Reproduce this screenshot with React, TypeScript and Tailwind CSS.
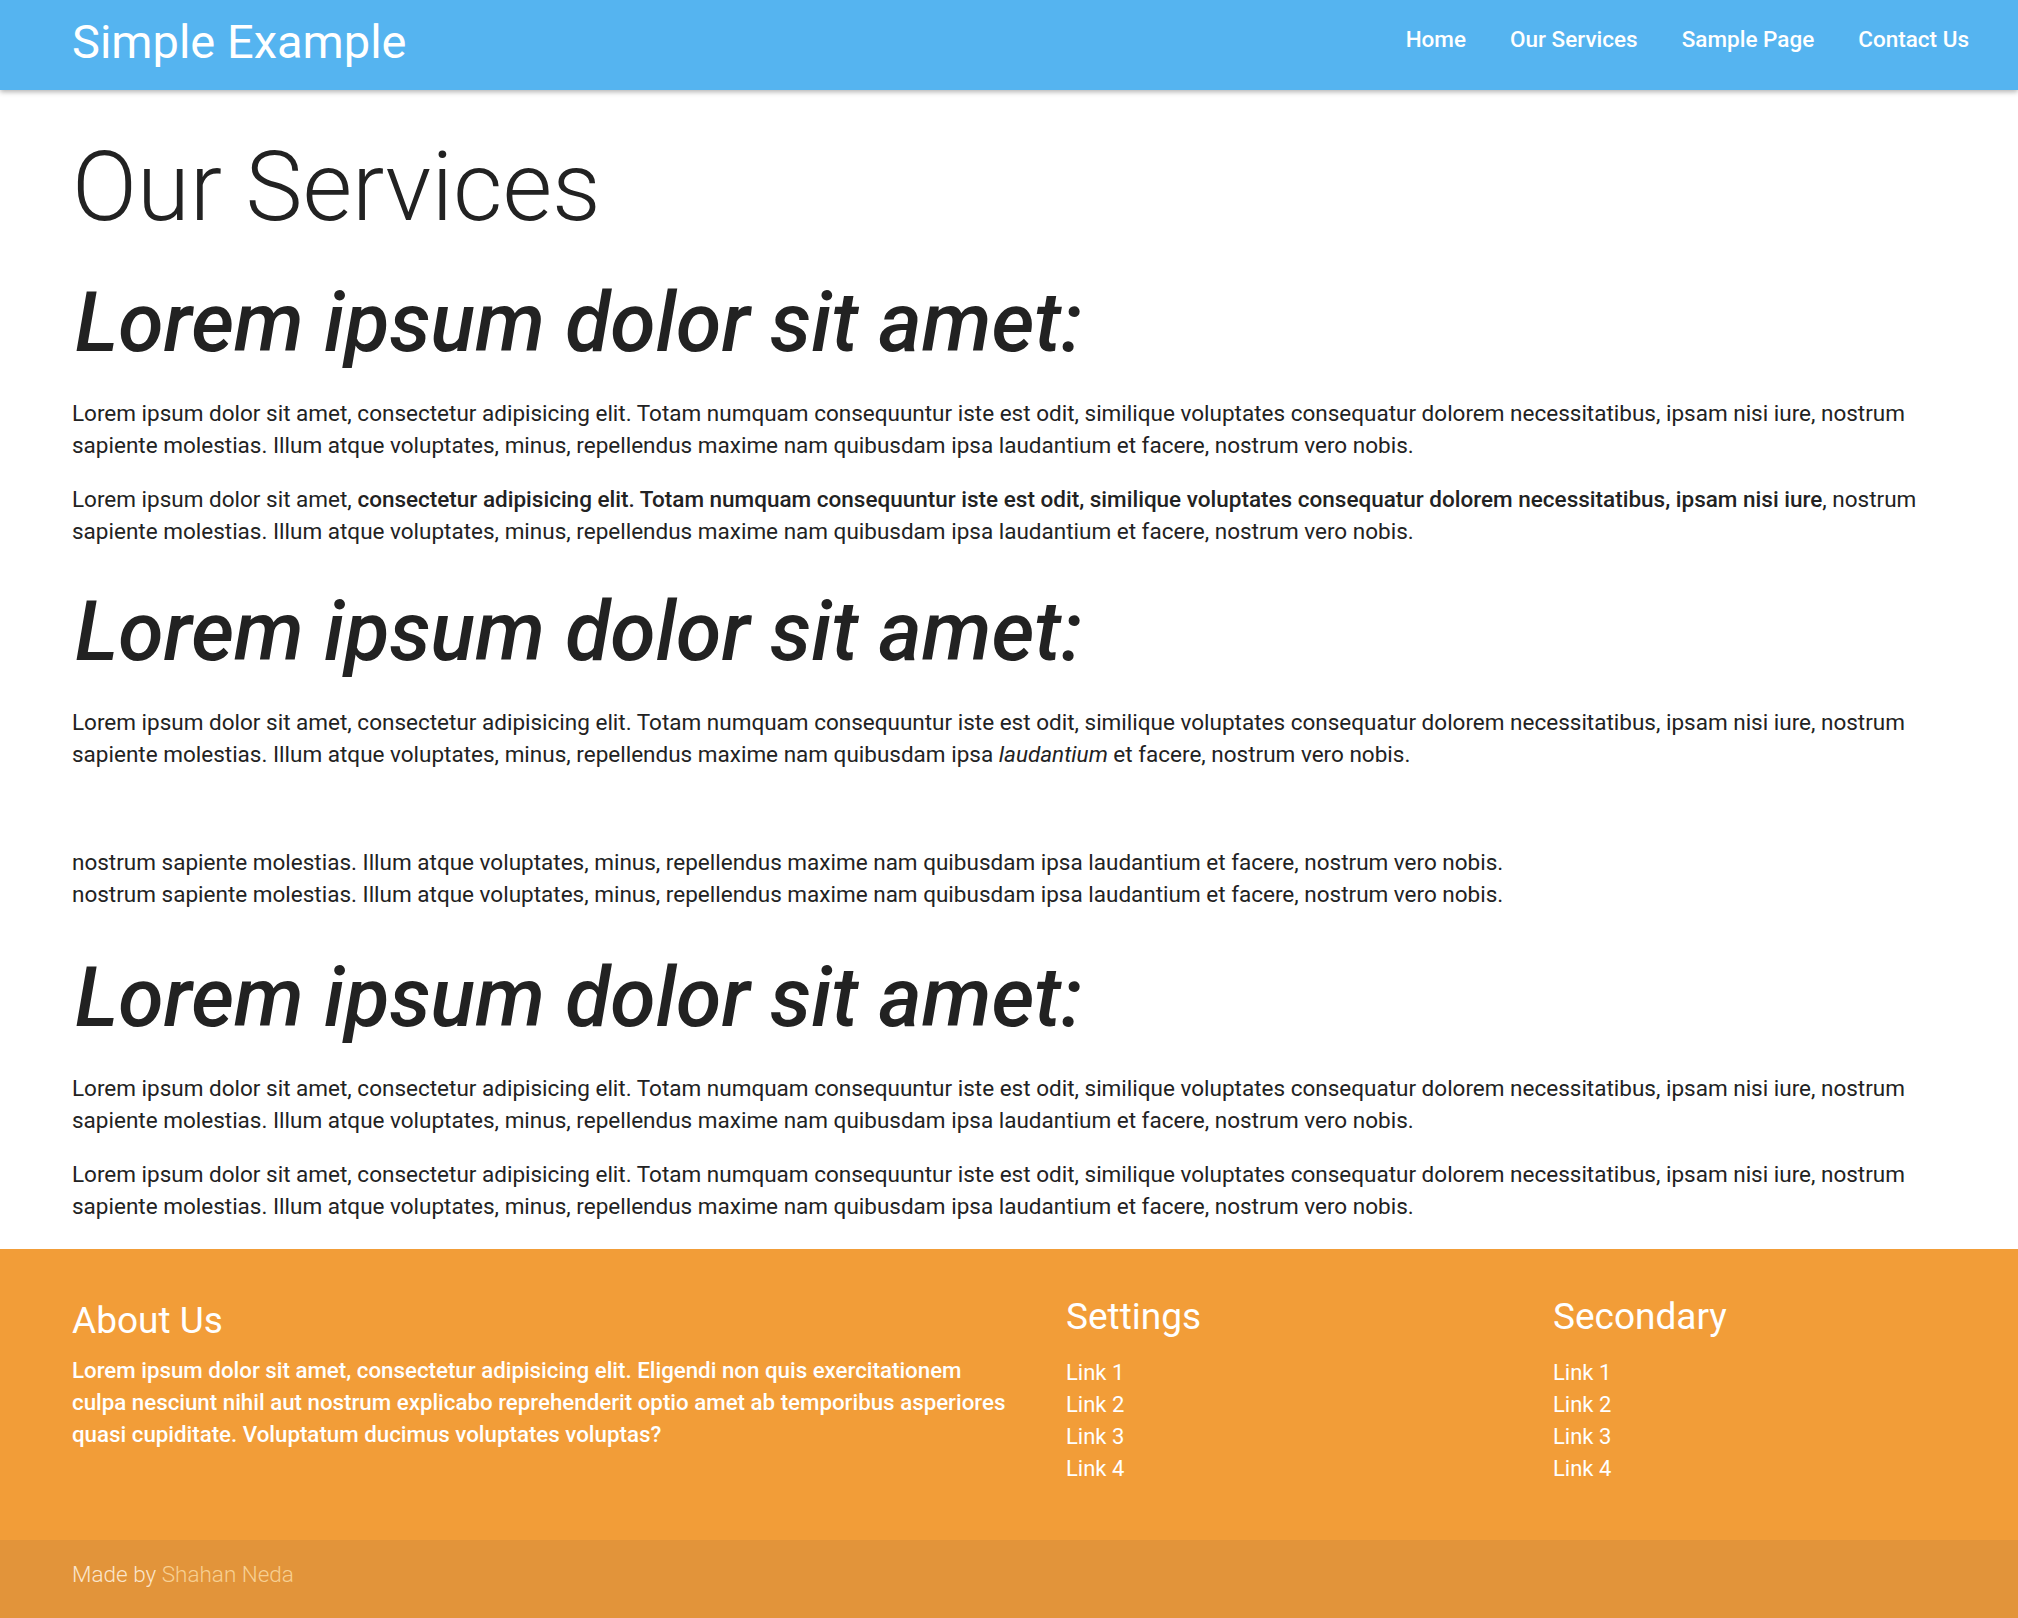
const paragraph =
  "Lorem ipsum dolor sit amet, consectetur adipisicing elit. Totam numquam consequuntur iste est odit, similique voluptates consequatur dolorem necessitatibus, ipsam nisi iure, nostrum sapiente molestias. Illum atque voluptates, minus, repellendus maxime nam quibusdam ipsa laudantium et facere, nostrum vero nobis.";

const repeatLine =
  "nostrum sapiente molestias. Illum atque voluptates, minus, repellendus maxime nam quibusdam ipsa laudantium et facere, nostrum vero nobis.";

function Header() {
  return (
    <header className="relative z-10 flex h-[90px] items-center justify-between bg-[#55b4f0] pl-[72px] pr-[49px] shadow-[0_2px_5px_rgba(0,0,0,0.3)]">
      <a href="#" className="-mt-[8px] text-[47px] leading-none text-white">
        Simple Example
      </a>
      <nav className="-mt-[10px] flex gap-[44px] text-[22.5px] font-medium text-white">
        <a href="#">Home</a>
        <a href="#">Our Services</a>
        <a href="#">Sample Page</a>
        <a href="#">Contact Us</a>
      </nav>
    </header>
  );
}

function Heading({ top }: { top: string }) {
  return (
    <h2 className={`${top} mb-[26px] pl-[3px] text-[82.5px] font-medium italic leading-[96px] text-[#222]`}>
      Lorem ipsum dolor sit amet:
    </h2>
  );
}

function FooterLinks({ title }: { title: string }) {
  return (
    <div>
      <h3 className="mb-[18px] text-[37px] leading-[44px] text-white">{title}</h3>
      <ul className="text-[22px] leading-[32px] text-white">
        <li><a href="#">Link 1</a></li>
        <li><a href="#">Link 2</a></li>
        <li><a href="#">Link 3</a></li>
        <li><a href="#">Link 4</a></li>
      </ul>
    </div>
  );
}

export default function App() {
  return (
    <div className="min-h-[1618px] bg-white font-['Roboto',_'Liberation_Sans',_sans-serif]">
      <Header />

      <main className="px-[72px] pt-[49px] pb-[5px] text-[22.5px] leading-[32px] text-[#222] [&_p]:mb-[22px]">
        <h1 className="mb-[40px] text-[96px] font-light leading-[96px] text-[#222]">Our Services</h1>

        <Heading top="mt-[37px]" />
        <p>{paragraph}</p>
        <p>
          Lorem ipsum dolor sit amet,{" "}
          <strong className="font-medium">
            consectetur adipisicing elit. Totam numquam consequuntur iste est odit, similique voluptates consequatur dolorem necessitatibus, ipsam nisi iure
          </strong>
          , nostrum sapiente molestias. Illum atque voluptates, minus, repellendus maxime nam quibusdam ipsa laudantium et facere, nostrum vero nobis.
        </p>

        <Heading top="mt-[37px]" />
        <p>
          Lorem ipsum dolor sit amet, consectetur adipisicing elit. Totam numquam consequuntur iste est odit, similique voluptates consequatur dolorem necessitatibus, ipsam nisi iure, nostrum sapiente molestias. Illum atque voluptates, minus, repellendus maxime nam quibusdam ipsa <em>laudantium</em> et facere, nostrum vero nobis.
        </p>
        <p>&nbsp;</p>
        <p>
          {repeatLine}
          <br />
          {repeatLine}
        </p>

        <Heading top="mt-[40px]" />
        <p>{paragraph}</p>
        <p>{paragraph}</p>
      </main>

      <footer>
        <div className="flex bg-[#f29d38] px-[72px] pt-[46px] pb-[55px]">
          <div className="w-[943px] pt-[4px]">
            <h3 className="mb-[11px] text-[37px] leading-[44px] text-white">About Us</h3>
            <p className="text-[22.3px] font-medium leading-[32px] text-white">
              Lorem ipsum dolor sit amet, consectetur adipisicing elit. Eligendi non quis exercitationem culpa nesciunt nihil aut nostrum explicabo reprehenderit optio amet ab temporibus asperiores quasi cupiditate. Voluptatum ducimus voluptates voluptas?
            </p>
          </div>
          <div className="ml-[51px] w-[487px]">
            <FooterLinks title="Settings" />
          </div>
          <div className="flex-1">
            <FooterLinks title="Secondary" />
          </div>
        </div>
        <div className="flex h-[79px] items-center bg-[#e2943a] px-[72px] pb-[10px] text-[22.5px] font-light text-[#fbe6cc]">
          <span>
            Made by <a href="#" className="text-[#f7d093]">Shahan Neda</a>
          </span>
        </div>
      </footer>
    </div>
  );
}
